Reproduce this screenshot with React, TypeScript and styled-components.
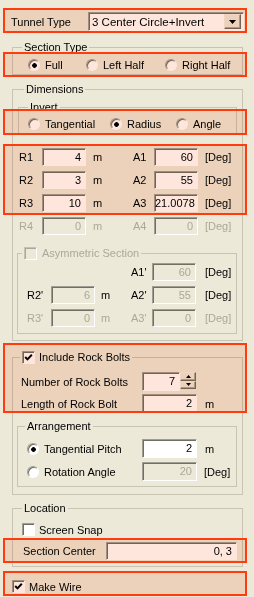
import styled, { createGlobalStyle, css } from 'styled-components';

const GlobalStyle = createGlobalStyle`
  html, body {
    margin: 0;
    padding: 0;
    background: #ece9d8;
  }
  body {
    font-family: "Liberation Sans", Arial, sans-serif;
    font-size: 11px;
    color: #000;
  }
`;

interface MarkProps {
  $t: number;
  $r: number;
  $b: number;
  $l: number;
}

// red annotation box laid over a part of the form
const marked = css<MarkProps>`
  position: relative;
  &::before,
  &::after {
    content: '';
    position: absolute;
    top: ${(p) => p.$t}px;
    right: ${(p) => p.$r}px;
    bottom: ${(p) => p.$b}px;
    left: ${(p) => p.$l}px;
    pointer-events: none;
  }
  &::before {
    background: #ffe6dc;
    mix-blend-mode: multiply;
  }
  &::after {
    border: 2px solid #ff3c10;
  }
`;

const sunken = css`
  box-sizing: border-box;
  border: 1px solid;
  border-color: #a09e93 #fff #fff #a09e93;
  box-shadow: inset 1px 1px 0 #716f64;
`;

const raised = css`
  box-sizing: border-box;
  background: #ece9d8;
  border: 1px solid;
  border-color: #f1efe2 #716f64 #716f64 #f1efe2;
  box-shadow: inset -1px -1px 0 #aca899;
`;

const Panel = styled.div`
  width: 254px;
  height: 597px;
  box-sizing: border-box;
  overflow: hidden;
  padding-top: 12px;
  background: #ece9d8;
`;

const Row = styled.div<{ $h?: number; $pl?: number; $mt?: number }>`
  display: flex;
  align-items: center;
  height: ${(p) => p.$h ?? 18}px;
  padding-left: ${(p) => p.$pl ?? 0}px;
  margin-top: ${(p) => p.$mt ?? 0}px;
`;

const MarkedRow = styled(Row)<MarkProps>`
  ${marked}
`;

const MarkedBlock = styled.div<MarkProps & { $mt?: number; $gap: number }>`
  ${marked}
  display: flex;
  flex-direction: column;
  gap: ${(p) => p.$gap}px;
  margin-top: ${(p) => p.$mt ?? 0}px;
`;

const Label = styled.span<{ $w?: number; $off?: boolean; $ml?: number }>`
  flex-shrink: 0;
  width: ${(p) => (p.$w ? `${p.$w}px` : 'auto')};
  margin-left: ${(p) => p.$ml ?? 0}px;
  color: ${(p) => (p.$off ? '#aca899' : '#000')};
  white-space: nowrap;
`;

const Field = styled.div<{ $w: number; $h?: number; $off?: boolean }>`
  ${sunken}
  flex-shrink: 0;
  width: ${(p) => p.$w}px;
  height: ${(p) => p.$h ?? 18}px;
  padding-right: 4px;
  background: ${(p) => (p.$off ? '#ece9d8' : '#fff')};
  color: ${(p) => (p.$off ? '#aca899' : '#000')};
  text-align: right;
  line-height: ${(p) => (p.$h ?? 18) - 2}px;
  white-space: nowrap;
`;

const Combo = styled.div`
  ${sunken}
  display: flex;
  align-items: center;
  width: 156px;
  height: 19px;
  padding: 0 2px 0 3px;
  background: #fff;
`;

const ComboText = styled.span`
  flex: 1;
  white-space: nowrap;
  font-size: 11.5px;
`;

const ComboButton = styled.span`
  ${raised}
  display: flex;
  align-items: center;
  justify-content: center;
  width: 17px;
  height: 15px;
`;

const Spinner = styled.div`
  display: flex;
  flex-direction: column;
  align-self: flex-start;
  width: 16px;
  height: 17px;
`;

const SpinButton = styled.span`
  ${raised}
  flex: 1;
  display: flex;
  align-items: center;
  justify-content: center;
`;

// etched group box; 1px line, so one extra px of padding keeps content where the 2px groove had it
const Group = styled.fieldset<{ $mt: number; $ml: number; $w: number; $pt?: number; $pb?: number }>`
  box-sizing: border-box;
  width: ${(p) => p.$w}px;
  min-width: 0;
  margin: ${(p) => p.$mt}px 0 0 ${(p) => p.$ml}px;
  padding: ${(p) => p.$pt ?? 0}px 1px ${(p) => (p.$pb ?? 0) + 1}px 1px;
  border: 1px solid #c7c4b4;
`;

const Caption = styled.legend<{ $ml: number }>`
  margin-left: ${(p) => p.$ml + 1}px;
  padding: 0 2px;
  height: 14px;
  line-height: 14px;
`;

const Choice = styled.span<{ $w?: number; $gap?: number; $off?: boolean }>`
  display: flex;
  align-items: center;
  flex-shrink: 0;
  gap: ${(p) => p.$gap ?? 5}px;
  width: ${(p) => (p.$w ? `${p.$w}px` : 'auto')};
  height: 14px;
  color: ${(p) => (p.$off ? '#aca899' : '#000')};
  white-space: nowrap;
`;

const RadioDot = styled.span<{ $on?: boolean }>`
  ${sunken}
  flex-shrink: 0;
  width: 12px;
  height: 12px;
  border-radius: 50%;
  background: ${(p) =>
    p.$on ? 'radial-gradient(circle at 55% 55%, #000 0 2px, #fff 2.6px)' : '#fff'};
`;

const Box = styled.span<{ $off?: boolean }>`
  ${sunken}
  display: flex;
  align-items: center;
  justify-content: center;
  flex-shrink: 0;
  width: 13px;
  height: 13px;
  background: ${(p) => (p.$off ? '#ece9d8' : '#fff')};
  border-color: ${(p) => (p.$off ? '#c5c2b2 #fff #fff #c5c2b2' : '#a09e93 #fff #fff #a09e93')};
  box-shadow: inset 1px 1px 0 ${(p) => (p.$off ? '#aca899' : '#716f64')};
`;

const Spacer = styled.span<{ $w: number }>`
  flex-shrink: 0;
  width: ${(p) => p.$w}px;
`;

function Arrow({ up, w = 7, h = 4 }: { up?: boolean; w?: number; h?: number }) {
  const pts = up ? `0,${h} ${w},${h} ${w / 2},0` : `0,0 ${w},0 ${w / 2},${h}`;
  return (
    <svg width={w} height={h} viewBox={`0 0 ${w} ${h}`}>
      <polygon points={pts} fill="#000" />
    </svg>
  );
}

function Tick() {
  return (
    <svg width="9" height="9" viewBox="0 0 9 9">
      <path d="M1.2 4 L3.5 6.4 L7.8 1.8" stroke="#000" strokeWidth="2" fill="none" />
    </svg>
  );
}

function Radio({ label, on, w }: { label: string; on?: boolean; w?: number }) {
  return (
    <Choice $w={w}>
      <RadioDot $on={on} />
      <span>{label}</span>
    </Choice>
  );
}

function Check({ label, on, off, gap = 4 }: { label: string; on?: boolean; off?: boolean; gap?: number }) {
  return (
    <Choice $gap={gap} $off={off}>
      <Box $off={off}>{on && <Tick />}</Box>
      <span>{label}</span>
    </Choice>
  );
}

interface DimProps {
  r: string;
  rv: string;
  a: string;
  av: string;
  off?: boolean;
}

function DimRow({ r, rv, a, av, off }: DimProps) {
  return (
    <Row $pl={5}>
      <Label $w={23} $off={off}>{r}</Label>
      <Field $w={44} $off={off}>{rv}</Field>
      <Label $w={40} $ml={7} $off={off}>m</Label>
      <Label $w={21} $off={off}>{a}</Label>
      <Field $w={44} $off={off}>{av}</Field>
      <Label $ml={7} $off={off}>[Deg]</Label>
    </Row>
  );
}

function AsymRow({ r, rv, a, av, dim }: { r?: string; rv?: string; a: string; av: string; dim?: boolean }) {
  return (
    <Row $pl={8}>
      {r ? (
        <>
          <Label $w={24} $off={dim}>{r}</Label>
          <Field $w={44} $off>{rv}</Field>
          <Label $w={30} $ml={6} $off={dim}>m</Label>
        </>
      ) : (
        <Spacer $w={104} />
      )}
      <Label $w={21} $off={dim}>{a}</Label>
      <Field $w={44} $off>{av}</Field>
      <Label $ml={9} $off={dim}>[Deg]</Label>
    </Row>
  );
}

const dims: DimProps[] = [
  { r: 'R1', rv: '4', a: 'A1', av: '60' },
  { r: 'R2', rv: '3', a: 'A2', av: '55' },
  { r: 'R3', rv: '10', a: 'A3', av: '21.0078' },
];

export default function App() {
  return (
    <>
      <GlobalStyle />
      <Panel>
        <MarkedRow $h={19} $pl={11} $t={-4} $r={7} $b={-2} $l={3}>
          <Label $w={77}>Tunnel Type</Label>
          <Combo>
            <ComboText>3 Center Circle+Invert</ComboText>
            <ComboButton>
              <Arrow />
            </ComboButton>
          </Combo>
        </MarkedRow>

        <Group $mt={9} $ml={12} $w={231} $pt={3}>
          <Caption $ml={7}>Section Type</Caption>
          <MarkedRow $h={16} $pl={14} $t={-5} $r={-6} $b={-4} $l={-11}>
            <Radio w={58} on label="Full" />
            <Radio w={79} label="Left Half" />
            <Radio label="Right Half" />
          </MarkedRow>
        </Group>

        <Group $mt={7} $ml={12} $w={231} $pb={5}>
          <Caption $ml={9}>Dimensions</Caption>

          <Group $mt={4} $ml={4} $w={219} $pt={2}>
            <Caption $ml={7}>Invert</Caption>
            <MarkedRow $h={16} $pl={8} $t={-7} $r={-12} $b={-3} $l={-17}>
              <Radio w={82} label="Tangential" />
              <Radio w={66} on label="Radius" />
              <Radio label="Angle" />
            </MarkedRow>
          </Group>

          <MarkedBlock $mt={14} $gap={5} $t={-4} $r={-6} $b={-3} $l={-11}>
            {dims.map((d) => (
              <DimRow key={d.r} {...d} />
            ))}
          </MarkedBlock>
          <Row $mt={5}>
            <DimRow r="R4" rv="0" a="A4" av="0" off />
          </Row>

          <Group $mt={11} $ml={3} $w={220} $pt={3} $pb={5}>
            <Caption $ml={2}>
              <Check off gap={5} label="Asymmetric Section" />
            </Caption>
            <AsymRow a="A1'" av="60" />
            <Row $mt={5}>
              <AsymRow r="R2'" rv="6" a="A2'" av="55" />
            </Row>
            <Row $mt={5}>
              <AsymRow r="R3'" rv="0" a="A3'" av="0" dim />
            </Row>
          </Group>
        </Group>

        <Group $mt={9} $ml={12} $w={231} $pt={8} $pb={6}>
          <Caption $ml={5}>
            <Check on label="Include Rock Bolts" />
          </Caption>
          <MarkedBlock $gap={3} $t={-29} $r={-6} $b={0} $l={-11}>
            <Row $h={19} $pl={7}>
              <Label $w={121}>Number of Rock Bolts</Label>
              <Field $w={38} $h={19}>7</Field>
              <Spinner>
                <SpinButton>
                  <Arrow up w={5} h={3} />
                </SpinButton>
                <SpinButton>
                  <Arrow w={5} h={3} />
                </SpinButton>
              </Spinner>
            </Row>
            <Row $h={19} $pl={7}>
              <Label $w={121}>Length of Rock Bolt</Label>
              <Field $w={55} $h={19}>2</Field>
              <Label $ml={8}>m</Label>
            </Row>
          </MarkedBlock>

          <Group $mt={6} $ml={3} $w={220} $pt={6} $pb={4}>
            <Caption $ml={5}>Arrangement</Caption>
            <Row $h={19} $pl={8}>
              <Choice $w={115}>
                <RadioDot $on />
                <span>Tangential Pitch</span>
              </Choice>
              <Field $w={55} $h={19}>2</Field>
              <Label $ml={8}>m</Label>
            </Row>
            <Row $h={19} $pl={8} $mt={4}>
              <Choice $w={115}>
                <RadioDot />
                <span>Rotation Angle</span>
              </Choice>
              <Field $w={55} $h={19} $off>20</Field>
              <Label $ml={7}>[Deg]</Label>
            </Row>
          </Group>
        </Group>

        <Group $mt={6} $ml={12} $w={231} $pt={8} $pb={5}>
          <Caption $ml={7}>Location</Caption>
          <Row $h={13} $pl={8}>
            <Check label="Screen Snap" />
          </Row>
          <MarkedRow $mt={6} $pl={9} $t={-4} $r={-6} $b={-3} $l={-11}>
            <Label $w={83}>Section Center</Label>
            <Field $w={131}>0, 3</Field>
          </MarkedRow>
        </Group>

        <MarkedRow $h={13} $mt={13} $pl={12} $t={-9} $r={7} $b={-3} $l={3}>
          <Check on label="Make Wire" />
        </MarkedRow>
      </Panel>
    </>
  );
}
